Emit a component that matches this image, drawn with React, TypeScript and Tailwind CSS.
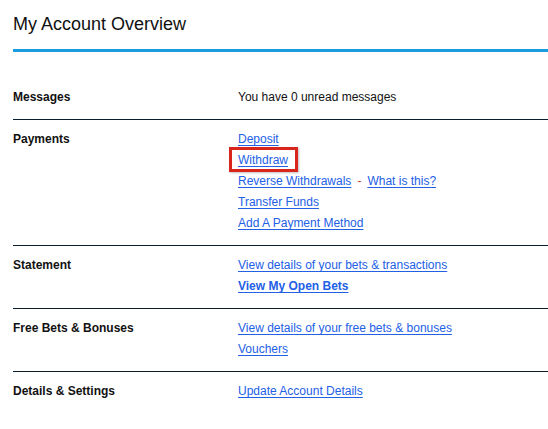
import React from 'react';

type Item = { text: string; bold?: boolean; highlight?: boolean; extra?: string };

const sections: { label: string; items?: Item[]; note?: string }[] = [
  { label: 'Messages', note: 'You have 0 unread messages' },
  {
    label: 'Payments',
    items: [
      { text: 'Deposit' },
      { text: 'Withdraw', highlight: true },
      { text: 'Reverse Withdrawals', extra: 'What is this?' },
      { text: 'Transfer Funds' },
      { text: 'Add A Payment Method' },
    ],
  },
  {
    label: 'Statement',
    items: [{ text: 'View details of your bets & transactions' }, { text: 'View My Open Bets', bold: true }],
  },
  {
    label: 'Free Bets & Bonuses',
    items: [{ text: 'View details of your free bets & bonuses' }, { text: 'Vouchers' }],
  },
  { label: 'Details & Settings', items: [{ text: 'Update Account Details' }] },
];

const linkCls = 'text-[#2260e6] underline underline-offset-[2px] decoration-[1px]';

export default function App() {
  return (
    <div className="min-h-[429px] bg-white pl-[13px] text-[#111] [font-family:'Liberation_Sans',Arial,sans-serif]">
      <h1 className="pt-[12px] text-[18px] leading-[24px] font-normal">My Account Overview</h1>
      <div className="mt-[13px] h-[3px] bg-[#1a9de0]" />

      <div className="mt-[26px]">
        {sections.map((s, i) => (
          <div
            key={s.label}
            className={`grid grid-cols-[225px_1fr] pt-[9px] pb-[11px] text-[12px] leading-[21px] ${
              i < sections.length - 1 ? 'border-b border-[#0b1f2e]' : ''
            }`}
          >
            <div className="font-bold">{s.label}</div>
            <div className="flex flex-col items-start">
              {s.note && <span>{s.note}</span>}
              {s.items?.map((it) => (
                <div key={it.text} className="flex items-center">
                  {it.highlight ? (
                    <span className="relative inline-block">
                      <a href="#" className={linkCls}>
                        {it.text}
                      </a>
                      <span className="pointer-events-none absolute -left-[9px] -right-[10px] top-[-3px] bottom-[-1px] border-[3px] border-[#d9261c] shadow-[1px_1px_2px_rgba(0,0,0,0.25)]" />
                    </span>
                  ) : (
                    <a href="#" className={`${linkCls} ${it.bold ? 'font-bold' : ''}`}>
                      {it.text}
                    </a>
                  )}
                  {it.extra && (
                    <>
                      <span className="mx-[6px] text-[#c0392b]">-</span>
                      <a href="#" className={linkCls}>
                        {it.extra}
                      </a>
                    </>
                  )}
                </div>
              ))}
            </div>
          </div>
        ))}
      </div>
    </div>
  );
}
